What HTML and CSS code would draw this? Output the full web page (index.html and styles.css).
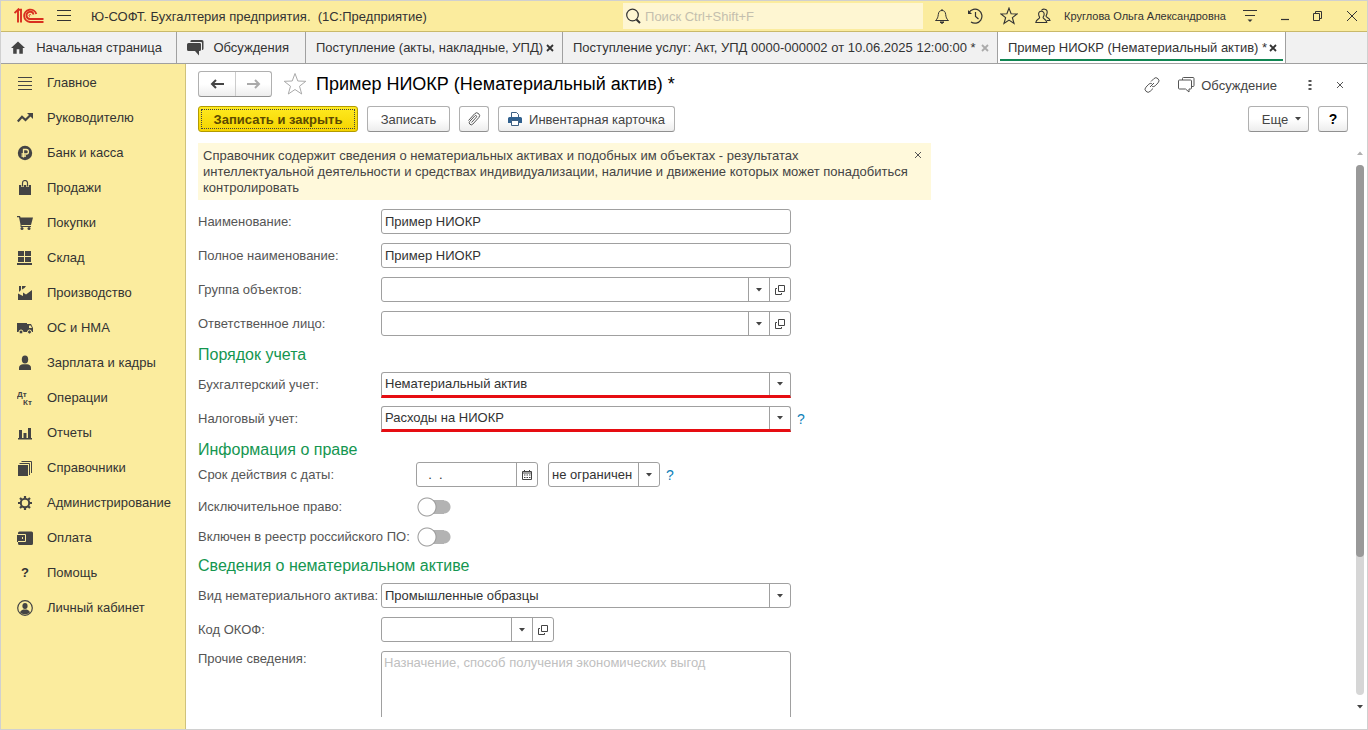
FILE: index.html
```html
<!DOCTYPE html>
<html lang="ru">

<head>
  <meta charset="UTF-8" />
  <title>Ю-СОФТ. Бухгалтерия предприятия</title>
  <link rel="stylesheet" href="styles.css">
</head>

<body>
  <svg class="sprite" aria-hidden="true">
    <symbol id="i-close" viewBox="0 0 8 8">
      <path d="M1 1l6 6M7 1L1 7" fill="none" stroke="currentColor" />
    </symbol>
    <symbol id="i-close-bold" viewBox="0 0 8 8">
      <path d="M1 1l6 6M7 1L1 7" fill="none" stroke="currentColor" stroke-width="1.8" />
    </symbol>
    <symbol id="i-down" viewBox="0 0 6 4">
      <path d="M0 0h6L3 3.5z" fill="currentColor" />
    </symbol>
    <symbol id="i-open" viewBox="0 0 10 10">
      <path d="M3.5 .5h6v6h-6zM2 3.5H.5v6h6V8" fill="none" stroke="currentColor" />
    </symbol>
    <symbol id="i-star" viewBox="0 0 24 24">
      <path d="M12 1.5l2.8 7.5 8 .3-6.3 4.9 2.2 7.8L12 17.5 5.3 22l2.2-7.8L1.2 9.3l8-.3z" fill="none" stroke="currentColor" />
    </symbol>
  </svg>

  <div class="app">
    <header class="topbar">
      <svg class="logo" width="30" height="16" viewBox="0 0 30 16" fill="none" stroke="#d9301f">
        <path d="M.5 5L4 1.7V14.5M7 14.5V1.2M3.5 1.7H8" stroke-width="1.9" />
        <path d="M22.3 6A6.2 6.2 0 1 0 16 14H29.5" stroke-width="1.9" />
        <path d="M19.6 6.5A3.6 3.6 0 1 0 16 11H29.5" stroke-width="1.8" />
        <path d="M17 7.2a1 1 0 1 0-1 1.3" />
      </svg>
      <button class="icon-btn" aria-label="Меню">
        <svg width="14" height="12" viewBox="0 0 14 12"><path d="M0 .5h14M0 5.5h14M0 10.5h14" stroke="#333" /></svg>
      </button>
      <h1>Ю-СОФТ. Бухгалтерия предприятия. &nbsp;(1С:Предприятие)</h1>
      <div class="search">
        <svg width="16" height="16" viewBox="0 0 16 16" fill="none" stroke="#333">
          <circle cx="7.5" cy="7" r="5.8" stroke-width="1.2" />
          <path d="M11.5 11.5l3.5 3.5" stroke-width="2" />
        </svg>
        <input type="text" placeholder="Поиск Ctrl+Shift+F" aria-label="Поиск" />
      </div>
      <div class="tools">
        <button class="icon-btn" aria-label="Уведомления">
          <svg width="16" height="16" viewBox="0 0 16 16" fill="none" stroke="#333">
            <path d="M1.5 12.5c2-1.5 2.5-3.5 2.8-6C4.6 3.5 6 2.5 8 2.5s3.4 1 3.7 4c.3 2.5.8 4.5 2.8 6zM8 1v1.5" />
            <path d="M6 14h4l-2 1.5z" fill="#333" />
          </svg>
        </button>
        <button class="icon-btn" aria-label="История">
          <svg width="16" height="16" viewBox="0 0 16 16" fill="none" stroke="#333">
            <path d="M2 4.5A7 7 0 1 1 4 14M8.5 4v4.5l3 2.5" stroke-width="1.2" />
            <path d="M1 2v4h4z" fill="#333" stroke="none" />
          </svg>
        </button>
        <button class="icon-btn" aria-label="Избранное">
          <svg class="dark" width="18" height="18"><use href="#i-star" stroke-width="1.5" /></svg>
        </button>
        <a class="user" href="#">
          <svg width="16" height="16" viewBox="0 0 16 16" fill="none" stroke="#333" stroke-width="1.1">
            <path d="M6.5 2.5C7 1.3 8.5 1 9.8 1.2 12 1.5 12.6 3.5 12 5.5c-.3 1.2-.8 1.8-1 2.5 0 1.5 3.5 1.5 4 4.5h-3" />
            <path d="M6.3 3.2c-2 0-3 1.6-2.6 3.6.2 1.2.7 1.9.9 2.7 0 1.6-3.4 1.5-3.8 5h11c-.4-3.5-3.6-3.4-3.7-5 .2-.8.8-1.5 1-2.7.3-2-.8-3.6-2.8-3.6z" />
          </svg>
          Круглова Ольга Александровна
        </a>
        <button class="icon-btn" aria-label="Настройки">
          <svg width="14" height="14" viewBox="0 0 14 14"><path d="M0 1.5h14M2 6.5h10" stroke="#333" /><path d="M4.5 10.5h5L7 13z" fill="#333" /></svg>
        </button>
      </div>
      <div class="window">
        <button class="icon-btn" aria-label="Свернуть">
          <svg width="10" height="10" viewBox="0 0 10 10"><path d="M1 8.5h8" stroke="#333" stroke-width="1.2" /></svg>
        </button>
        <button class="icon-btn" aria-label="Окно">
          <svg width="10" height="10" viewBox="0 0 10 10" fill="none" stroke="#333"><path d="M.5 2.5h6v7h-6zM2.5 2.5v-2h6v7h-2" /></svg>
        </button>
        <button class="icon-btn" aria-label="Закрыть">
          <svg class="dark" width="12" height="12" viewBox="0 0 12 12"><path d="M1 1l10 10M11 1L1 11" fill="none" stroke="currentColor" /></svg>
        </button>
      </div>
    </header>

    <nav class="tabs">
      <a class="tab tab-home" href="#">
        <svg width="14" height="13" viewBox="0 0 16 14"><path d="M8 0l8 7.5h-2.5V14h-4V9h-3v5h-4V7.5H0z" fill="#444" /></svg>
        <span>Начальная страница</span>
      </a>
      <a class="tab tab-talk" href="#">
        <svg width="17" height="16" viewBox="0 0 17 16" fill="#444">
          <path d="M4.5 0H15a1.5 1.5 0 0 1 1.5 1.5v7A1.5 1.5 0 0 1 15 10V3a1 1 0 0 0-1-1H3.5A1.5 1.5 0 0 1 4.5 0z" />
          <path d="M1.5 3H12.5A1.3 1.3 0 0 1 14 4.5v5A1.5 1.5 0 0 1 12.5 11H12v4.5L8 11H1.5A1.5 1.5 0 0 1 0 9.5v-5A1.5 1.5 0 0 1 1.5 3z" />
        </svg>
        <span>Обсуждения</span>
      </a>
      <a class="tab tab-doc" href="#"><span>Поступление (акты, накладные, УПД)</span><svg width="8" height="8"><use href="#i-close-bold" /></svg></a>
      <a class="tab tab-act" href="#"><span>Поступление услуг: Акт, УПД 0000-000002 от 10.06.2025 12:00:00 *</span><svg class="dim" width="8" height="8"><use href="#i-close-bold" /></svg></a>
      <a class="tab tab-item active" href="#"><span>Пример НИОКР (Нематериальный актив) *</span><svg width="8" height="8"><use href="#i-close-bold" /></svg></a>
    </nav>

    <div class="workspace">
      <nav class="sidebar">
        <a href="#"><svg viewBox="0 0 16 16"><path d="M1 2.5h14M1 6.5h14M1 10.5h14M1 14.5h14" stroke="#444" /></svg>Главное</a>
        <a href="#"><svg viewBox="0 0 16 16"><path d="M.8 11.5L5 6.8l3.5 3.2L14 4.5" fill="none" stroke="#444" stroke-width="2.2" /><path d="M10 3h6v6z" fill="#444" /></svg>Руководителю</a>
        <a href="#"><svg viewBox="0 0 16 16"><circle cx="8" cy="8" r="7.2" fill="#444" /><path d="M6.5 12.5v-8h2.7a2.2 2.2 0 0 1 0 4.5H4.5M4.5 11h4.5" fill="none" stroke="#fbec9e" stroke-width="1.3" /></svg>Банк и касса</a>
        <a href="#"><svg viewBox="0 0 16 16"><path d="M2 5h12v10H2z" fill="#444" /><path d="M5.5 7V3.5a2.5 2.5 0 0 1 5 0V7" fill="none" stroke="#fbec9e" stroke-width="2.6" /><path d="M5.5 6.5V3a2.5 2.5 0 0 1 5 0v3.5" fill="none" stroke="#444" stroke-width="1.2" /></svg>Продажи</a>
        <a href="#"><svg viewBox="0 0 16 16" fill="#444"><path d="M0 1h3l.6 1.5H16L14 10H4.5v1H14v1H3.5V9.5L2 2.2H0z" /><circle cx="5" cy="13.5" r="1.5" /><circle cx="12" cy="13.5" r="1.5" /></svg>Покупки</a>
        <a href="#"><svg viewBox="0 0 16 16"><path d="M1 1h6v5H1zM8 1h6v5H8zM1 7h6v5H1zM8 7h6v5H8zM0 13h15v2H0z" fill="#444" /></svg>Склад</a>
        <a href="#"><svg viewBox="0 0 16 16"><path d="M1 15V8.5L6 11V7.5l3 2L15 5v10zM2 7V1h2v4zM5 4.5V1h4L7.5 3z" fill="#444" /></svg>Производство</a>
        <a href="#"><svg viewBox="0 0 16 16" fill="#444"><path d="M0 3h10v9H0zM10 4h4l2 4v4h-6z" /><path d="M12 5.5h1.7l1.3 2.5h-3z" fill="#fbec9e" /><circle cx="4" cy="12" r="2" stroke="#fbec9e" /><circle cx="12.5" cy="12" r="2" stroke="#fbec9e" /></svg>ОС и НМА</a>
        <a href="#"><svg viewBox="0 0 16 16" fill="#444"><ellipse cx="8" cy="4.5" rx="3.2" ry="3.9" /><path d="M2 15v-2.500c0-2 2-3 4-3.3h4c2 .3 4 1.3 4 3.3V15z" /></svg>Зарплата и кадры</a>
        <a href="#"><svg viewBox="0 0 16 16" class="dtkt"><text x="0" y="7">Дт</text><text x="6" y="15">Кт</text></svg>Операции</a>
        <a href="#"><svg viewBox="0 0 16 16"><path d="M1 13h14v1.5H1zM2 5h3v8H2zM6.5 8h3v5h-3zM11 3h3v10h-3z" fill="#444" /></svg>Отчеты</a>
        <a href="#"><svg viewBox="0 0 16 16"><path d="M1 5h10v11H1z" fill="#444" /><path d="M2.5 3.5h10V15M4.5 1.5h10V13" fill="none" stroke="#444" /></svg>Справочники</a>
        <a href="#"><svg viewBox="0 0 16 16" fill="none" stroke="#444"><circle cx="8" cy="8" r="4.2" stroke-width="2" /><path d="M8 1v2.5M8 12.5V15M1 8h2.5M12.5 8H15M3 3l1.8 1.8M11.2 11.2L13 13M13 3l-1.8 1.8M4.8 11.2L3 13" stroke-width="2.2" /></svg>Администрирование</a>
        <a href="#"><svg viewBox="0 0 16 16"><path d="M2.5 1.5h12A1.5 1.5 0 0 1 16 3v10.5a1.5 1.5 0 0 1-1.5 1.5h-12A1.5 1.5 0 0 1 1 13.5V12H0V5h1V3a1.5 1.5 0 0 1 1.5-1.5z" fill="#444" /><path d="M1 4.5h7.5v7H1M5.5 7v2" fill="none" stroke="#fbec9e" /></svg>Оплата</a>
        <a href="#"><b>?</b>Помощь</a>
        <a href="#"><svg viewBox="0 0 16 16"><circle cx="8" cy="8" r="7.3" fill="none" stroke="#444" stroke-width="1.2" /><ellipse cx="8" cy="6" rx="2.6" ry="3" fill="#444" /><path d="M3 12.2c1-1.8 2.5-2.4 3.5-2.6h3c1 .2 2.5.8 3.5 2.6-2.5 2.8-7.5 2.8-10 0z" fill="#444" /></svg>Личный кабинет</a>
      </nav>

      <main class="page">
        <div class="title-row">
          <div class="history">
            <button aria-label="Назад"><svg width="14" height="10" viewBox="0 0 14 10"><path d="M14 5H3M6 1L2 5l4 4" fill="none" stroke="#444" stroke-width="2" /></svg></button>
            <button aria-label="Вперед"><svg width="14" height="10" viewBox="0 0 14 10"><path d="M0 5h11M8 1l4 4-4 4" fill="none" stroke="#aaa" stroke-width="2" /></svg></button>
          </div>
          <button class="icon-btn favorite" aria-label="В избранное"><svg width="24" height="24"><use href="#i-star" /></svg></button>
          <h2>Пример НИОКР (Нематериальный актив) *</h2>
          <div class="title-tools">
            <button class="icon-btn" aria-label="Ссылка">
              <svg width="16" height="16" viewBox="0 0 16 16" fill="none" stroke="#555"><path d="M7 4.5l2.8-2.8a2.9 2.9 0 0 1 4.2 0 2.9 2.9 0 0 1 0 4.2L11.2 8.8a2.7 2.7 0 0 1-3 .6M9 11.5l-2.8 2.8a2.9 2.9 0 0 1-4.2 0 2.9 2.9 0 0 1 0-4.2L4.8 7.2a2.7 2.7 0 0 1 3-.6M6 10l4-4" /></svg>
            </button>
            <a class="talk" href="#">
              <svg width="17" height="16" viewBox="0 0 17 16" fill="none" stroke="#555"><path d="M4.5 3V1.5a1 1 0 0 1 1-1h9.5a1 1 0 0 1 1 1v7a1 1 0 0 1-1 1h-1.5" /><path d="M1.5 3h11a1 1 0 0 1 1 1v7a1 1 0 0 1-1 1H11v3l-3.5-3h-6a1 1 0 0 1-1-1V4a1 1 0 0 1 1-1z" /></svg>
              Обсуждение
            </a>
            <button class="icon-btn" aria-label="Действия"><svg width="4" height="12" viewBox="0 0 4 12"><path d="M.5 1h3v2h-3zM.5 5h3v2h-3zM.5 9h3v2h-3z" fill="#555" /></svg></button>
            <button class="icon-btn" aria-label="Закрыть форму"><svg width="8" height="8"><use href="#i-close" /></svg></button>
          </div>
        </div>

        <div class="toolbar">
          <button class="btn primary">Записать и закрыть</button>
          <button class="btn save">Записать</button>
          <button class="btn square" aria-label="Файлы">
            <svg width="14" height="14" viewBox="0 0 14 14" fill="none" stroke="#555"><path d="M4.5 10.5l5-5.5a1 1 0 0 0-1.5-1.3L2.8 9.3a2 2 0 0 0 3 2.8l6-6.5a2.8 2.8 0 0 0-4.2-3.8L1.5 8.5" /></svg>
          </button>
          <button class="btn print">
            <svg width="14" height="14" viewBox="0 0 14 14"><path d="M3.5 5V.5h5l2 2V5" fill="#fff" stroke="#3d5f82" /><path d="M1.5 5h11A1.5 1.5 0 0 1 14 6.5V11H0V6.5A1.5 1.5 0 0 1 1.5 5z" fill="#31618f" /><path d="M3.5 8.5h7v5h-7z" fill="#fff" stroke="#3d5f82" /></svg>
            Инвентарная карточка
          </button>
          <button class="btn more">Еще <svg width="6" height="4"><use href="#i-down" /></svg></button>
          <button class="btn square help">?</button>
        </div>

        <div class="scroll-area">
          <form class="form">
            <div class="info">
              <p>Справочник содержит сведения о нематериальных активах и подобных им объектах - результатах<br />
                интеллектуальной деятельности и средствах индивидуализации, наличие и движение которых может понадобиться<br />
                контролировать</p>
              <button type="button" class="icon-btn" aria-label="Скрыть подсказку"><svg width="8" height="8"><use href="#i-close" /></svg></button>
            </div>

            <div class="row">
              <label for="name">Наименование:</label>
              <div class="field"><input type="text" id="name" value="Пример НИОКР" /></div>
            </div>
            <div class="row">
              <label for="fullName">Полное наименование:</label>
              <div class="field"><input type="text" id="fullName" value="Пример НИОКР" /></div>
            </div>
            <div class="row">
              <label for="group">Группа объектов:</label>
              <div class="field">
                <input type="text" id="group" />
                <button type="button" aria-label="Выбрать"><svg width="6" height="4"><use href="#i-down" /></svg></button>
                <button type="button" aria-label="Открыть"><svg width="10" height="10"><use href="#i-open" /></svg></button>
              </div>
            </div>
            <div class="row">
              <label for="person">Ответственное лицо:</label>
              <div class="field">
                <input type="text" id="person" />
                <button type="button" aria-label="Выбрать"><svg width="6" height="4"><use href="#i-down" /></svg></button>
                <button type="button" aria-label="Открыть"><svg width="10" height="10"><use href="#i-open" /></svg></button>
              </div>
            </div>

            <h3>Порядок учета</h3>
            <div class="row">
              <label for="accounting">Бухгалтерский учет:</label>
              <div class="field select marked">
                <select id="accounting"><option>Нематериальный актив</option></select>
                <span class="arrow"><svg width="6" height="4"><use href="#i-down" /></svg></span>
              </div>
            </div>
            <div class="row">
              <label for="tax">Налоговый учет:</label>
              <div class="field select marked">
                <select id="tax"><option>Расходы на НИОКР</option></select>
                <span class="arrow"><svg width="6" height="4"><use href="#i-down" /></svg></span>
              </div>
              <a class="hint" href="#">?</a>
            </div>

            <h3 class="tight">Информация о праве</h3>
            <div class="row wide-label">
              <label for="dateFrom">Срок действия с даты:</label>
              <div class="field date">
                <input type="text" id="dateFrom" value="  .  ." />
                <button type="button" aria-label="Календарь"><svg width="10" height="10" viewBox="0 0 10 10"><path d="M.5 1.5h9v8h-9zM.5 3h9M2.5 0v2M7.5 0v2" fill="none" stroke="#444" /><path d="M2 5h1.5M4.5 5H6M7 5h1.5M2 7.5h1.5M4.5 7.5H6M7 7.5h1.5" stroke="#444" /></svg></button>
              </div>
              <div class="field select term">
                <select aria-label="Срок"><option>не ограничен</option></select>
                <span class="arrow"><svg width="6" height="4"><use href="#i-down" /></svg></span>
              </div>
              <a class="hint" href="#">?</a>
            </div>
            <div class="row wide-label short">
              <label for="exclusive">Исключительное право:</label>
              <input type="checkbox" class="switch" id="exclusive" />
            </div>
            <div class="row wide-label short">
              <label for="registry">Включен в реестр российского ПО:</label>
              <input type="checkbox" class="switch" id="registry" />
            </div>

            <h3>Сведения о нематериальном активе</h3>
            <div class="row">
              <label for="kind">Вид нематериального актива:</label>
              <div class="field select">
                <select id="kind"><option>Промышленные образцы</option></select>
                <span class="arrow"><svg width="6" height="4"><use href="#i-down" /></svg></span>
              </div>
            </div>
            <div class="row">
              <label for="okof">Код ОКОФ:</label>
              <div class="field code">
                <input type="text" id="okof" />
                <button type="button" aria-label="Выбрать"><svg width="6" height="4"><use href="#i-down" /></svg></button>
                <button type="button" aria-label="Открыть"><svg width="10" height="10"><use href="#i-open" /></svg></button>
              </div>
            </div>
            <div class="row top">
              <label for="other">Прочие сведения:</label>
              <textarea id="other" placeholder="Назначение, способ получения экономических выгод"></textarea>
            </div>
          </form>

          <div class="scrollbar">
            <svg class="up" width="6" height="4"><use href="#i-down" /></svg>
            <div class="track"><div class="thumb"></div></div>
            <svg width="6" height="4"><use href="#i-down" /></svg>
          </div>
        </div>
      </main>
    </div>
  </div>
</body>

</html>
```
FILE: styles.css
```css
* {
  box-sizing: border-box;
}

body {
  margin: 0;
  font-family: "Liberation Sans", Arial, sans-serif;
  font-size: 13px;
  color: #444;
  background: #fff;
}

h1,
h2,
h3,
p {
  margin: 0;
  font-weight: normal;
}

a {
  color: inherit;
  text-decoration: none;
}

button,
input,
select,
textarea {
  font: inherit;
  color: inherit;
  margin: 0;
}

svg {
  flex: none;
}

.sprite {
  display: none;
}

.app {
  height: 100vh;
  display: flex;
  flex-direction: column;
  border: 1px solid #d0d0d0;
}

.icon-btn {
  display: flex;
  padding: 0;
  border: none;
  background: none;
  color: #555;
  cursor: pointer;
}

.dark {
  color: #333;
}

/* top bar */
.topbar {
  flex: none;
  height: 31px;
  display: flex;
  align-items: center;
  padding: 0 9px 0 13px;
  background: #fbec9e;
  border-bottom: 1px solid #c9b96a;
}

.topbar h1 {
  flex: 1;
  margin-left: 20px;
  font-size: 13px;
  color: #333;
}

.logo {
  margin-right: 13px;
}

.search {
  width: 300px;
  height: 26px;
  display: flex;
  align-items: center;
  gap: 4px;
  padding: 0 2px;
  background: #fef6d2;
}

.search input {
  flex: 1;
  min-width: 0;
  padding: 0;
  border: none;
  outline: none;
  background: none;
}

.search input::placeholder {
  color: #c4bfae;
  opacity: 1;
}

.tools,
.window {
  display: flex;
  align-items: center;
}

.tools {
  gap: 17px;
  margin-left: 11px;
}

.user {
  display: flex;
  align-items: center;
  gap: 13px;
  font-size: 11px;
  color: #333;
}

.window {
  gap: 23px;
  margin-left: 23px;
}

/* open windows */
.tabs {
  flex: none;
  height: 32px;
  display: flex;
  background: #f1f1f1;
  border-bottom: 1px solid #a0a0a0;
}

.tab {
  display: flex;
  align-items: center;
  justify-content: space-between;
  padding: 0 8px 0 10px;
  border-right: 1px solid #a0a0a0;
  white-space: nowrap;
  color: #333;
}

.tab .dim {
  color: #aaa;
}

.tab-home {
  width: 176px;
  padding-right: 14px;
}

.tab-talk {
  width: 129px;
  padding-right: 16px;
}

.tab-doc {
  width: 257px;
}

.tab-act {
  width: 435px;
}

.tab-item {
  width: 288px;
}

.tab.active {
  background: linear-gradient(#118653, #118653) center bottom 2px / calc(100% - 4px) 2px no-repeat #fff;
}

.workspace {
  flex: 1;
  min-height: 0;
  display: flex;
}

/* sections */
.sidebar {
  flex: none;
  width: 185px;
  padding-top: 1px;
  background: #fbec9e;
  border-right: 1px solid #cfc27c;
}

.sidebar a {
  height: 35px;
  display: flex;
  align-items: center;
  gap: 14px;
  padding-left: 16px;
  color: #333;
}

.sidebar svg,
.sidebar b {
  width: 16px;
  height: 16px;
  text-align: center;
}

.dtkt {
  font-size: 8px;
  font-weight: bold;
  fill: #444;
}

/* form page */
.page {
  flex: 1;
  min-width: 0;
  display: flex;
  flex-direction: column;
  padding: 7px 0 12px 12px;
}

.title-row {
  height: 26px;
  display: flex;
  align-items: center;
}

.history {
  display: flex;
  height: 26px;
  border: 1px solid #b0b0b0;
  border-bottom-color: #909090;
  border-radius: 3px;
  background: linear-gradient(#fff 50%, #ededed);
}

.history button {
  width: 36px;
  padding: 0;
  border: none;
  background: none;
}

.history button + button {
  border-left: 1px solid #ccc;
}

.favorite {
  margin: 0 9px 0 11px;
  color: #aaa;
}

.title-row h2 {
  flex: 1;
  font-size: 18px;
  color: #000;
}

.title-tools {
  display: flex;
  align-items: center;
  padding: 2px 23px 0 0;
}

.talk {
  display: flex;
  align-items: center;
  gap: 6px;
  margin: 0 31px 0 18px;
}

.title-tools .icon-btn + .icon-btn {
  margin-left: 24px;
}

.toolbar {
  display: flex;
  gap: 9px;
  margin-top: 9px;
  padding-right: 19px;
}

.btn {
  height: 26px;
  display: flex;
  align-items: center;
  justify-content: center;
  gap: 7px;
  padding: 0;
  border: 1px solid #b0b0b0;
  border-bottom-color: #909090;
  border-radius: 3px;
  background: linear-gradient(#fff 50%, #ededed);
}

.btn.primary {
  width: 160px;
  font-weight: bold;
  color: #5c4a00;
  border-color: #b39b00;
  background: linear-gradient(#ffea20, #f5d400);
  outline: 1px dotted #444;
  outline-offset: -4px;
}

.btn.save {
  width: 83px;
}

.btn.square {
  width: 30px;
}

.btn.print {
  width: 177px;
}

.btn.more {
  width: 61px;
  margin-left: auto;
  padding-left: 6px;
}

.btn.help {
  font-size: 14px;
  font-weight: bold;
  color: #000;
}

.scroll-area {
  flex: 1;
  min-height: 0;
  display: flex;
  justify-content: space-between;
  margin-top: 11px;
}

.form {
  overflow: hidden;
}

.info {
  width: 733px;
  display: flex;
  align-items: flex-start;
  margin-bottom: 9px;
  padding: 5px 9px 4px 5px;
  line-height: 16px;
  background: #fff9db;
}

.info p {
  flex: 1;
}

.info .icon-btn {
  padding-top: 3px;
}

.row {
  height: 25px;
  display: flex;
  align-items: center;
  margin-bottom: 9px;
}

.row label {
  flex: none;
  width: 183px;
  white-space: nowrap;
  color: #555;
}

.row.wide-label label {
  width: 218px;
}

.row.short {
  height: 21px;
}

.row.top {
  height: auto;
  align-items: flex-start;
}

.form h3 {
  margin-bottom: 7px;
  font-size: 16px;
  line-height: 20px;
  color: #149650;
}

.form h3.tight {
  margin-bottom: 2px;
}

.field {
  width: 410px;
  height: 25px;
  display: flex;
  border: 1px solid #a0a0a0;
  border-radius: 3px;
  background: #fff;
  color: #333;
}

.field input,
.field select {
  flex: 1;
  min-width: 0;
  padding: 0 3px;
  border: none;
  outline: none;
  background: none;
}

.field button,
.arrow {
  width: 21px;
  padding: 0;
  display: flex;
  align-items: center;
  justify-content: center;
  border: none;
  border-left: 1px solid #a0a0a0;
  background: none;
  color: #444;
}

.field.select {
  display: grid;
  grid-template: 1fr / 1fr;
}

.field select {
  grid-area: 1 / 1;
  appearance: none;
}

.arrow {
  grid-area: 1 / 1;
  justify-self: end;
  pointer-events: none;
}

.field.marked {
  height: 26px;
  border-bottom: 3px solid #e60d12;
  border-bottom-left-radius: 0;
  border-bottom-right-radius: 0;
}

.field.date {
  width: 122px;
  margin-right: 10px;
}

.field.date input {
  padding-left: 4px;
}

.field.term {
  width: 112px;
}

.field.code {
  width: 173px;
}

.hint {
  margin-left: 6px;
  font-size: 14px;
  color: #0f7fb8;
}

.switch {
  appearance: none;
  width: 34px;
  height: 20px;
  margin-left: 1px;
  background:
    radial-gradient(circle at 10px 10px, #fff 8px, #999 9px, transparent 10px),
    radial-gradient(circle at 27px 10px, #b3b3b3 6px, transparent 7px),
    linear-gradient(#b3b3b3, #b3b3b3) 10px center / 17px 14px no-repeat;
}

textarea {
  width: 410px;
  height: 100px;
  padding: 3px 2px;
  border: 1px solid #a0a0a0;
  border-radius: 3px;
  resize: none;
}

textarea::placeholder {
  color: #c0c0c0;
  opacity: 1;
}

.scrollbar {
  width: 8px;
  margin-right: 3px;
  display: flex;
  flex-direction: column;
  align-items: center;
  gap: 10px;
  padding: 8px 0;
}

.scrollbar .up {
  transform: rotate(180deg);
  color: #b0b0b0;
}

.track {
  flex: 1;
  width: 8px;
  border-radius: 4px;
  background: #d6d6d6;
}

.thumb {
  height: 74%;
  border-radius: 4px;
  background: #999;
}
```
